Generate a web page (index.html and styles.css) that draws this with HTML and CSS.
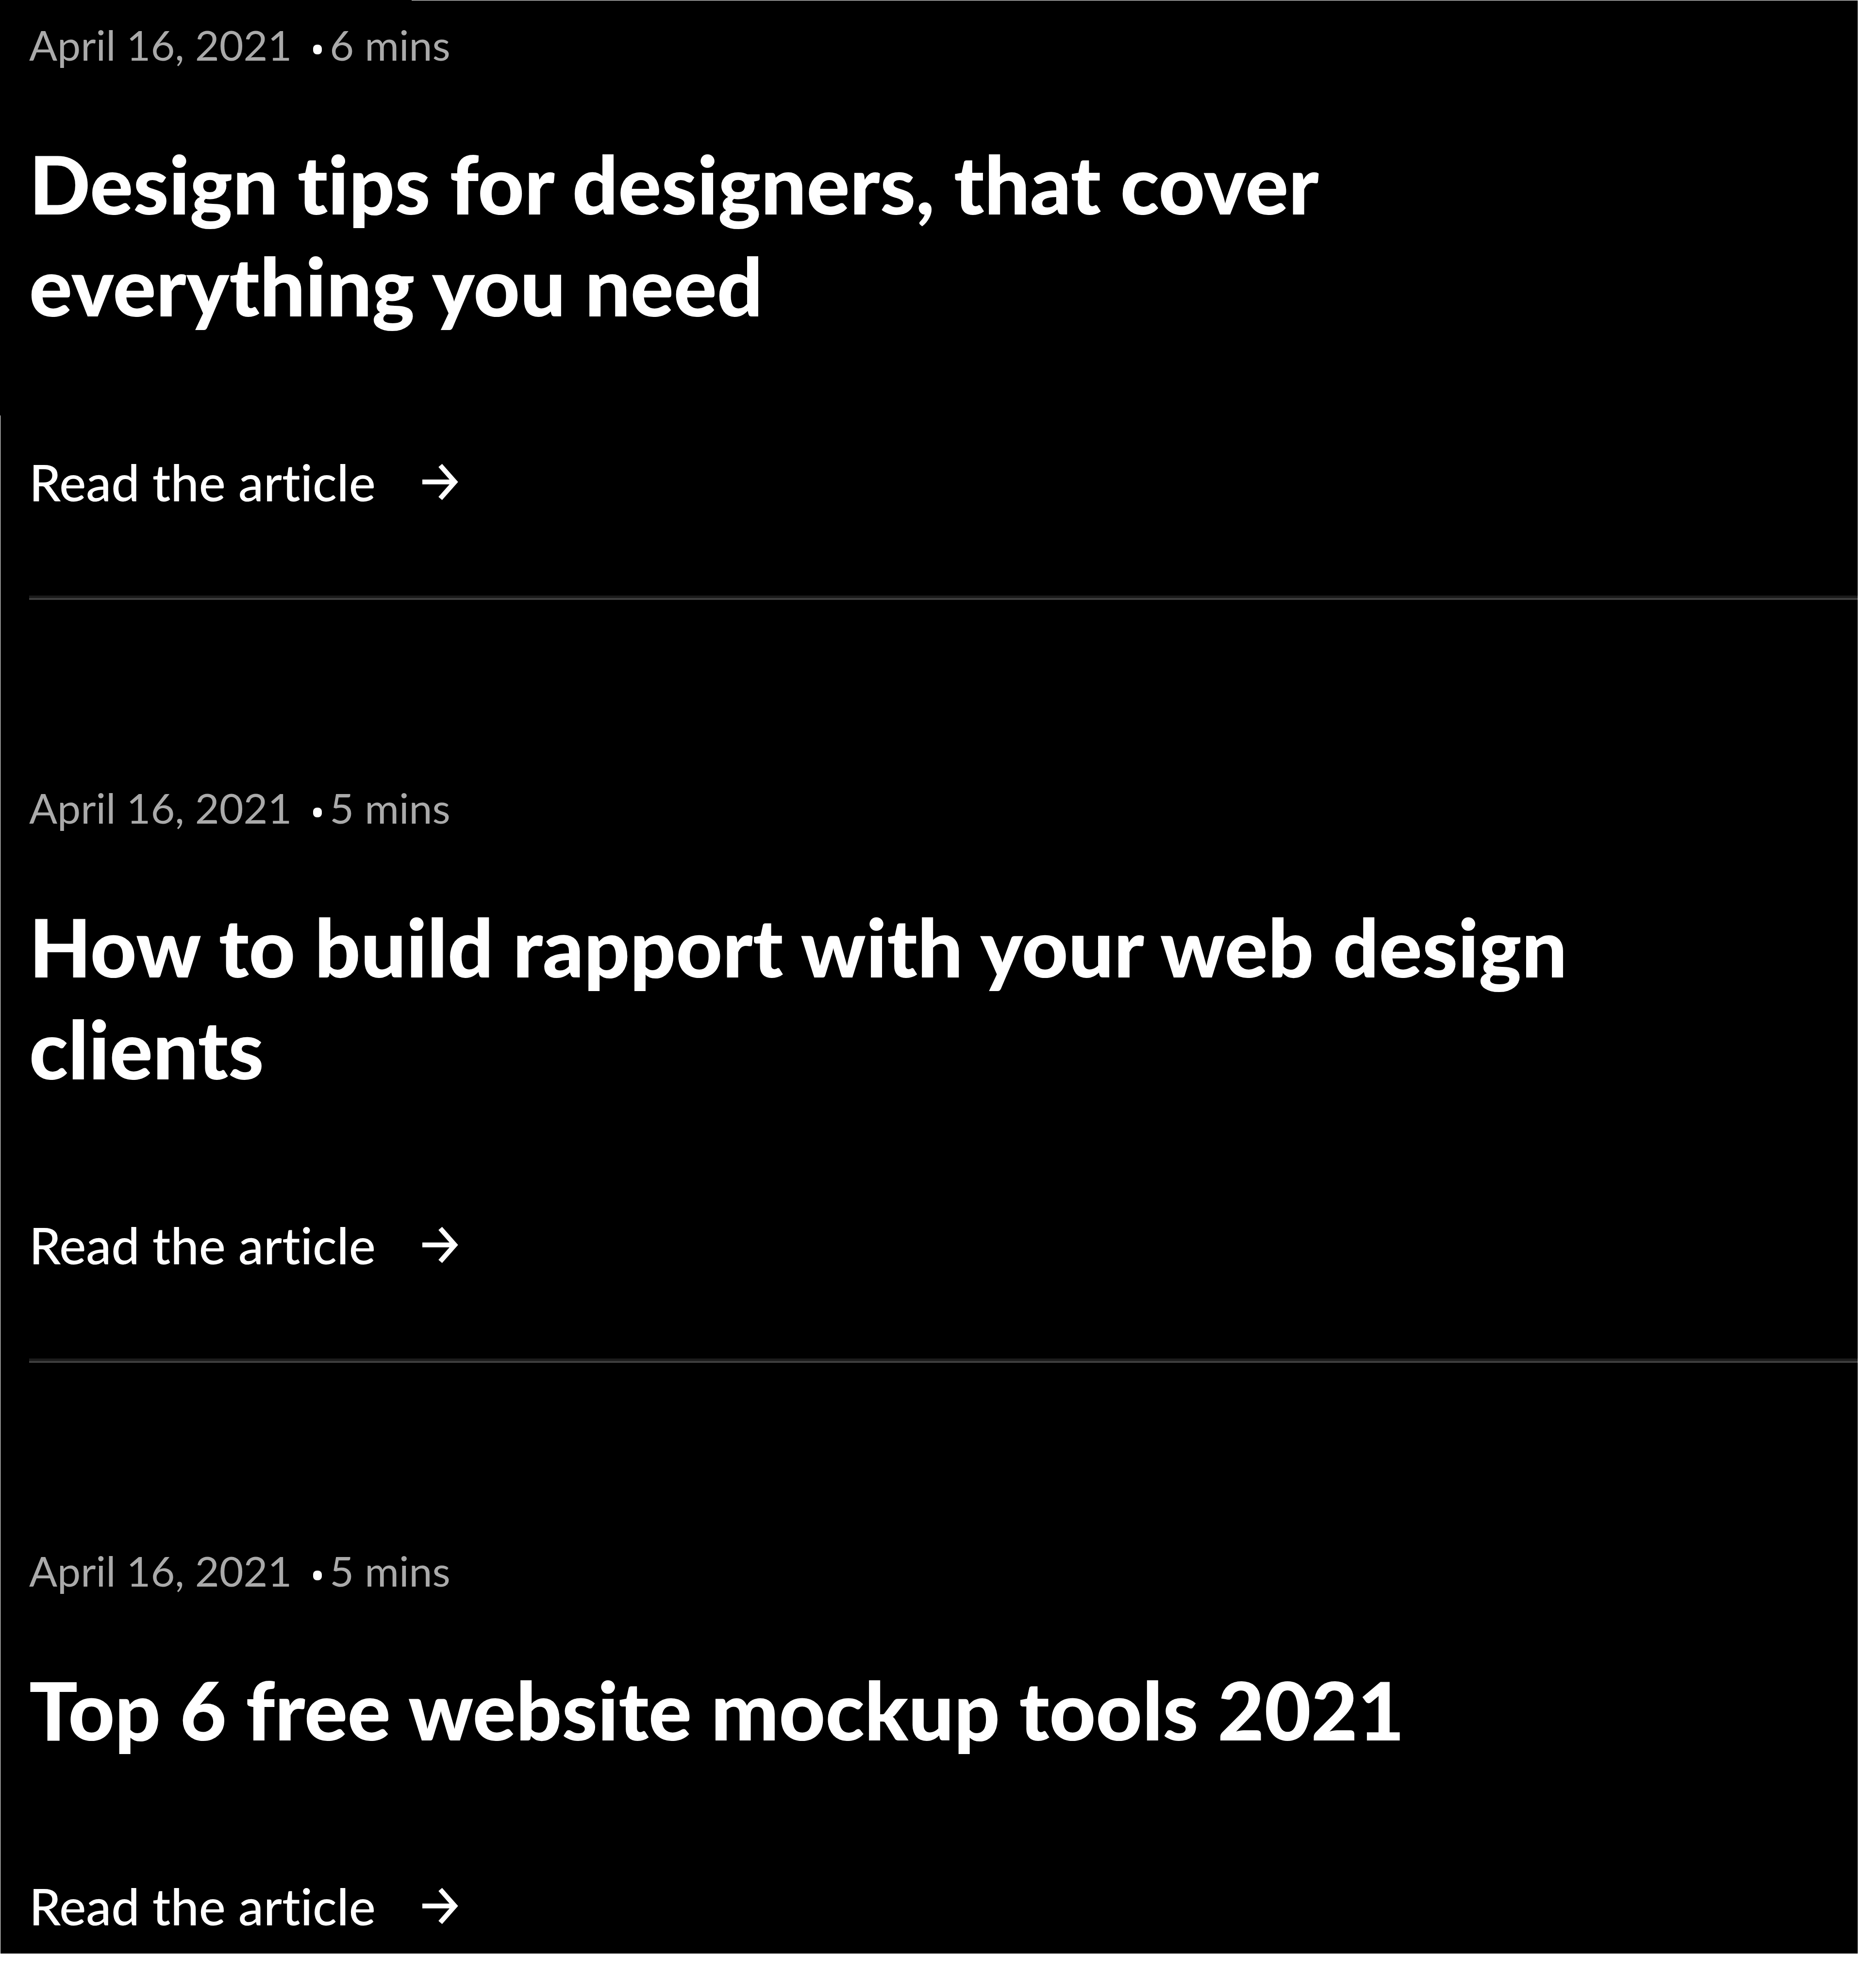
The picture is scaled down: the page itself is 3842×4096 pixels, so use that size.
FILE: index.html
```html
<!DOCTYPE html>
<html lang="en">
<head>
<meta charset="utf-8">
<title>Articles</title>
<link rel="stylesheet" href="styles.css">
</head>
<body>
<main class="articles">
  <article class="article">
    <p class="meta"><time datetime="2021-04-16">April 16, 2021</time><span class="dot"></span><span>6 mins</span></p>
    <h2 class="title">Design tips for designers, that cover everything you need</h2>
    <a class="more" href="#design-tips">Read the article
      <svg class="arrow" viewBox="0 0 74 76" aria-hidden="true"><path d="M0 38H66M37 4L67 38L37 72"/></svg></a>
  </article>
  <hr class="divider">
  <article class="article">
    <p class="meta"><time datetime="2021-04-16">April 16, 2021</time><span class="dot"></span><span>5 mins</span></p>
    <h2 class="title">How to build rapport with your web design clients</h2>
    <a class="more" href="#rapport">Read the article
      <svg class="arrow" viewBox="0 0 74 76" aria-hidden="true"><path d="M0 38H66M37 4L67 38L37 72"/></svg></a>
  </article>
  <hr class="divider">
  <article class="article">
    <p class="meta"><time datetime="2021-04-16">April 16, 2021</time><span class="dot"></span><span>5 mins</span></p>
    <h2 class="title">Top 6 free website mockup tools 2021</h2>
    <a class="more" href="#mockup-tools">Read the article
      <svg class="arrow" viewBox="0 0 74 76" aria-hidden="true"><path d="M0 38H66M37 4L67 38L37 72"/></svg></a>
  </article>
</main>
</body>
</html>
```
FILE: styles.css
```css
body {
  margin: 0;
  background: #fff;
  color: #fff;
  font-family: Lato, "Open Sans", sans-serif;
  font-variant-ligatures: none;
}

/* Black panel with hairlines that start part of the way along the top and left edges */
.articles {
  margin-right: 15px;
  padding: 40px 0 36px 60px;
  background:
    linear-gradient(#fff, #fff) 848px 0 / 100% 1px no-repeat,
    linear-gradient(#fff, #fff) 0 856px / 1px 100% no-repeat,
    #000;
}

.article {
  display: flex;
  flex-direction: column;
  align-items: flex-start;
}

.meta {
  display: flex;
  align-items: center;
  margin: 0 0 129px;
  color: #aaa;
  font-size: 86px;
  line-height: 104px;
}

.dot {
  width: 18px;
  height: 20px;
  margin: 20px 16px 0 44px;
  border-radius: 8px;
  background: #fff;
}

.title {
  max-width: 90%;
  margin: 0 0 238px;
  font-size: 166px;
  font-weight: 900;
  line-height: 210px;
}

.more {
  display: flex;
  align-items: center;
  gap: 96px;
  color: #fff;
  font-size: 104px;
  font-weight: 500;
  line-height: 124px;
  text-decoration: none;
}

.arrow {
  width: 74px;
  height: 76px;
  fill: none;
  stroke: #fff;
  stroke-width: 10px;
}

.divider {
  margin: 172px 0 376px;
  border: 0 solid #3e3e3e;
  border-top: 5px solid #1b1b1b;
  border-bottom-width: 4px;
}
```
